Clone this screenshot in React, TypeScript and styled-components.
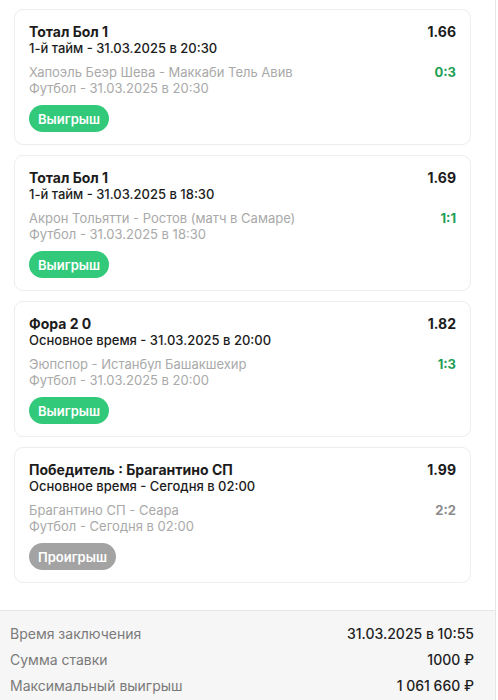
import styled, { createGlobalStyle } from 'styled-components';

const GlobalStyle = createGlobalStyle`
  * {
    box-sizing: border-box;
  }

  body {
    margin: 0;
    background: #ffffff;
    font-family: Inter, 'Noto Sans', sans-serif;
    color: #1f1f1f;
  }
`;

type BetStatus = 'win' | 'lose';

interface Bet {
  market: string;
  period: string;
  odds: string;
  teams: string;
  score: string;
  sport: string;
  status: BetStatus;
}

const BETS: Bet[] = [
  {
    market: 'Тотал Бол 1',
    period: '1-й тайм - 31.03.2025 в 20:30',
    odds: '1.66',
    teams: 'Хапоэль Беэр Шева - Маккаби Тель Авив',
    score: '0:3',
    sport: 'Футбол - 31.03.2025 в 20:30',
    status: 'win',
  },
  {
    market: 'Тотал Бол 1',
    period: '1-й тайм - 31.03.2025 в 18:30',
    odds: '1.69',
    teams: 'Акрон Тольятти - Ростов (матч в Самаре)',
    score: '1:1',
    sport: 'Футбол - 31.03.2025 в 18:30',
    status: 'win',
  },
  {
    market: 'Фора 2 0',
    period: 'Основное время - 31.03.2025 в 20:00',
    odds: '1.82',
    teams: 'Эюпспор - Истанбул Башакшехир',
    score: '1:3',
    sport: 'Футбол - 31.03.2025 в 20:00',
    status: 'win',
  },
  {
    market: 'Победитель : Брагантино СП',
    period: 'Основное время - Сегодня в 02:00',
    odds: '1.99',
    teams: 'Брагантино СП - Сеара',
    score: '2:2',
    sport: 'Футбол - Сегодня в 02:00',
    status: 'lose',
  },
];

const SUMMARY = [
  { label: 'Время заключения', value: '31.03.2025 в 10:55' },
  { label: 'Сумма ставки', value: '1000 ₽' },
  { label: 'Максимальный выигрыш', value: '1 061 660 ₽' },
];

const BetCard = ({ bet }: { bet: Bet }) => {
  const isWin = bet.status === 'win';

  return (
    <S.Card>
      <S.Row>
        <S.Market>{bet.market}</S.Market>
        <S.Odds>{bet.odds}</S.Odds>
      </S.Row>
      <S.Period>{bet.period}</S.Period>
      <S.Details>
        <S.Row>
          <S.Muted>{bet.teams}</S.Muted>
          <S.Score $win={isWin}>{bet.score}</S.Score>
        </S.Row>
        <S.Muted>{bet.sport}</S.Muted>
      </S.Details>
      <S.Badge $win={isWin}>{isWin ? 'Выигрыш' : 'Проигрыш'}</S.Badge>
    </S.Card>
  );
};

const App = () => {
  return (
    <>
      <GlobalStyle />
      <S.Page>
        <S.List>
          {BETS.map((bet, index) => (
            <BetCard key={index} bet={bet} />
          ))}
        </S.List>
        <S.Summary>
          {SUMMARY.map((item) => (
            <S.SummaryRow key={item.label}>
              <S.SummaryLabel>{item.label}</S.SummaryLabel>
              <S.SummaryValue>{item.value}</S.SummaryValue>
            </S.SummaryRow>
          ))}
        </S.Summary>
      </S.Page>
    </>
  );
};

const S = {
  Page: styled.div`
    width: 496px;
    min-height: 700px;
    display: flex;
    flex-direction: column;
    border-right: 1px solid #e6e6e6;
    background: #ffffff;
  `,

  List: styled.ul`
    display: flex;
    flex-direction: column;
    gap: 10px;
    margin: 0;
    padding: 9px 24px 27px 14px;
    list-style: none;
  `,

  Card: styled.li`
    display: flex;
    flex-direction: column;
    align-items: flex-start;
    height: 136px;
    padding: 13px 14px 12px 14px;
    border: 1px solid #ededed;
    border-radius: 9px;
    background: #ffffff;
  `,

  Row: styled.div`
    display: flex;
    justify-content: space-between;
    align-items: center;
    width: 100%;
  `,

  Market: styled.span`
    font-size: 14px;
    line-height: 17px;
    font-weight: 700;
    color: #1c1c1c;
  `,

  Odds: styled.span`
    font-size: 14px;
    line-height: 17px;
    font-weight: 700;
    color: #1c1c1c;
  `,

  Period: styled.span`
    font-size: 13px;
    line-height: 17px;
    font-weight: 500;
    color: #1c1c1c;
  `,

  Details: styled.div`
    display: flex;
    flex-direction: column;
    width: 100%;
    margin-top: 7px;
  `,

  Muted: styled.span`
    font-size: 13px;
    line-height: 16px;
    font-weight: 400;
    color: #a9a9a9;
  `,

  Score: styled.span<{ $win: boolean }>`
    font-size: 13px;
    line-height: 16px;
    font-weight: 700;
    color: ${(props) => (props.$win ? '#1f9e55' : '#8c8c8c')};
  `,

  Badge: styled.span<{ $win: boolean }>`
    margin-top: 9px;
    height: 27px;
    padding: 0 9px;
    display: inline-flex;
    align-items: center;
    border-radius: 14px;
    font-size: 13px;
    font-weight: 600;
    color: #ffffff;
    background-color: ${(props) => (props.$win ? '#33c97a' : '#a3a3a3')};
  `,

  Summary: styled.div`
    flex: 1;
    display: flex;
    flex-direction: column;
    padding: 9px 21px 2px 10px;
    border-top: 1px solid #e8e8e8;
    background: #f6f6f6;
  `,

  SummaryRow: styled.div`
    display: flex;
    justify-content: space-between;
    align-items: center;
    height: 26px;
  `,

  SummaryLabel: styled.span`
    font-size: 14px;
    color: #7a7a7a;
  `,

  SummaryValue: styled.span`
    font-size: 14px;
    font-weight: 500;
    color: #1f1f1f;
  `,
};

export default App;
